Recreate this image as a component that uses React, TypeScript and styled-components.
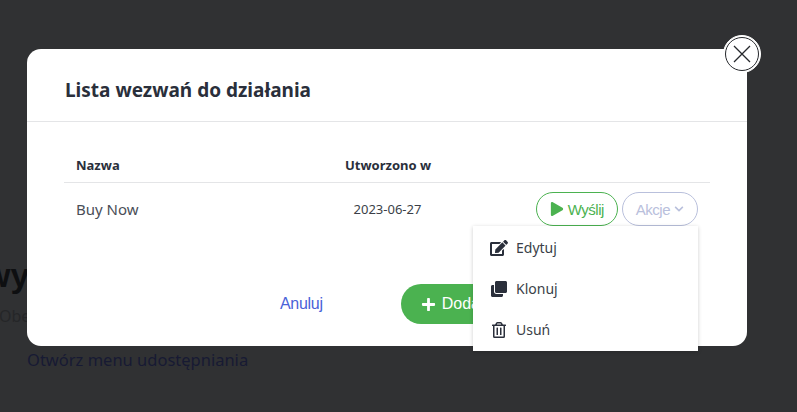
import styled, { createGlobalStyle } from 'styled-components';
import { FaChevronDown, FaClone, FaEdit, FaPlay, FaPlus, FaRegTrashAlt } from 'react-icons/fa';

const GlobalStyle = createGlobalStyle`
  html, body {
    margin: 0;
    height: 100%;
    background: #303133;
    overflow: hidden;
  }
  body {
    font-family: "Noto Sans", "Open Sans", sans-serif;
  }
`;

const Page = styled.div`
  height: 412px;
  padding: 251px 0 0 27px;
  box-sizing: border-box;
`;

const PageTitle = styled.h1`
  margin: 0 0 0 -43px;
  font: 700 34px/48px "Liberation Sans", sans-serif;
  color: #0e0f11;
  white-space: nowrap;
`;

const PageNote = styled.p`
  margin: 5px 0 0 -28px;
  font-size: 16px;
  line-height: 24px;
  color: #252628;
`;

const PageLink = styled.a`
  display: block;
  margin-top: 20px;
  font-size: 16.5px;
  line-height: 24px;
  color: #171a33;
`;

const Modal = styled.div`
  position: absolute;
  left: 27px;
  top: 49px;
  width: 720px;
  height: 297px;
  background: #fff;
  border-radius: 14px;
  display: flex;
  flex-direction: column;
`;

const CloseButton = styled.button`
  position: absolute;
  top: -14px;
  right: -14px;
  width: 38px;
  height: 38px;
  padding: 0;
  box-sizing: border-box;
  border: 1px solid #fff;
  border-radius: 50%;
  background: #fff;
  display: flex;
  align-items: center;
  justify-content: center;

  &::before {
    content: '';
    position: absolute;
    inset: 1px;
    border: 1.5px solid #26282c;
    border-radius: 50%;
  }
`;

const ModalHeader = styled.div`
  height: 73px;
  box-sizing: border-box;
  padding: 10px 38px 0;
  display: flex;
  align-items: center;
  border-bottom: 1px solid #e4e5e7;
`;

const ModalTitle = styled.h2`
  margin: 0;
  font-size: 19px;
  font-weight: 700;
  color: #2a2f3b;
`;

const ModalBody = styled.div`
  padding: 26px 37px 0;
`;

const Row = styled.div`
  display: grid;
  grid-template-columns: 269px 85px 1fr;
  align-items: center;
  padding: 0 12px;
`;

const HeadRow = styled(Row)`
  height: 34px;
  border-bottom: 1px solid #e4e5e7;
`;

const BodyRow = styled(Row)`
  height: 52px;
`;

const HeadCell = styled.div`
  font-size: 13px;
  font-weight: 700;
  color: #2a2f3b;
  white-space: nowrap;
`;

const NameCell = styled.div`
  font-size: 15px;
  color: #4a4e57;
`;

const DateCell = styled.div`
  font-size: 13px;
  color: #3b3f48;
  justify-self: center;
  white-space: nowrap;
`;

const Actions = styled.div`
  display: flex;
  justify-content: flex-end;
  gap: 4px;
`;

const OutlineButton = styled.button<{ $color: string }>`
  height: 34px;
  box-sizing: border-box;
  padding: 0 13px;
  display: flex;
  align-items: center;
  gap: 4px;
  background: #fff;
  border: 1px solid ${({ $color }) => $color};
  border-radius: 17px;
  color: ${({ $color }) => $color};
  font: 15px "Liberation Sans", sans-serif;
  letter-spacing: -0.5px;
`;

const Footer = styled.div`
  margin-top: 49px;
  padding-left: 216px;
  display: flex;
  align-items: center;
  gap: 78px;
`;

const CancelLink = styled.a`
  font: 16px "Liberation Sans", sans-serif;
  letter-spacing: -0.3px;
  color: #4a62d8;
`;

const AddButton = styled.button`
  width: 130px;
  height: 40px;
  padding: 0 20px;
  display: flex;
  align-items: center;
  gap: 6px;
  border: 0;
  border-radius: 20px;
  background: #4bb250;
  color: #fff;
  font: 16px "Liberation Sans", sans-serif;
`;

const Dropdown = styled.ul`
  position: absolute;
  left: 446px;
  top: 177px;
  width: 225px;
  height: 125px;
  margin: 0;
  padding: 1px 0;
  box-sizing: border-box;
  list-style: none;
  background: #fff;
  box-shadow: 0 1px 4px rgba(0, 0, 0, 0.2);
  display: flex;
  flex-direction: column;
`;

const MenuItem = styled.li`
  flex: 1;
  padding-left: 17px;
  display: flex;
  align-items: center;
  gap: 8px;
  font-size: 14px;
  color: #3b3f48;

  svg {
    width: 18px;
    height: 16px;
    color: #2a2f3b;
  }
`;

export default function App() {
  return (
    <>
      <GlobalStyle />
      <Page>
        <PageTitle>wyniki</PageTitle>
        <PageNote>Obecnie</PageNote>
        <PageLink>Otwórz menu udostępniania</PageLink>
      </Page>
      <Modal>
        <CloseButton aria-label="Zamknij">
          <svg width="18" height="18" viewBox="0 0 18 18" fill="none" stroke="#26282c" strokeWidth="1.3">
            <path d="M1 1l16 16M17 1L1 17" />
          </svg>
        </CloseButton>
        <ModalHeader>
          <ModalTitle>Lista wezwań do działania</ModalTitle>
        </ModalHeader>
        <ModalBody>
          <HeadRow>
            <HeadCell>Nazwa</HeadCell>
            <HeadCell>Utworzono w</HeadCell>
          </HeadRow>
          <BodyRow>
            <NameCell>Buy Now</NameCell>
            <DateCell>2023-06-27</DateCell>
            <Actions>
              <OutlineButton $color="#4bb250">
                <FaPlay size={14} />
                Wyślij
              </OutlineButton>
              <OutlineButton $color="#b9c0dc">
                Akcje
                <FaChevronDown size={10} />
              </OutlineButton>
            </Actions>
          </BodyRow>
          <Footer>
            <CancelLink>Anuluj</CancelLink>
            <AddButton>
              <FaPlus size={15} />
              Dodaj
            </AddButton>
          </Footer>
        </ModalBody>
        <Dropdown>
          <MenuItem><FaEdit />Edytuj</MenuItem>
          <MenuItem><FaClone />Klonuj</MenuItem>
          <MenuItem><FaRegTrashAlt />Usuń</MenuItem>
        </Dropdown>
      </Modal>
    </>
  );
}
